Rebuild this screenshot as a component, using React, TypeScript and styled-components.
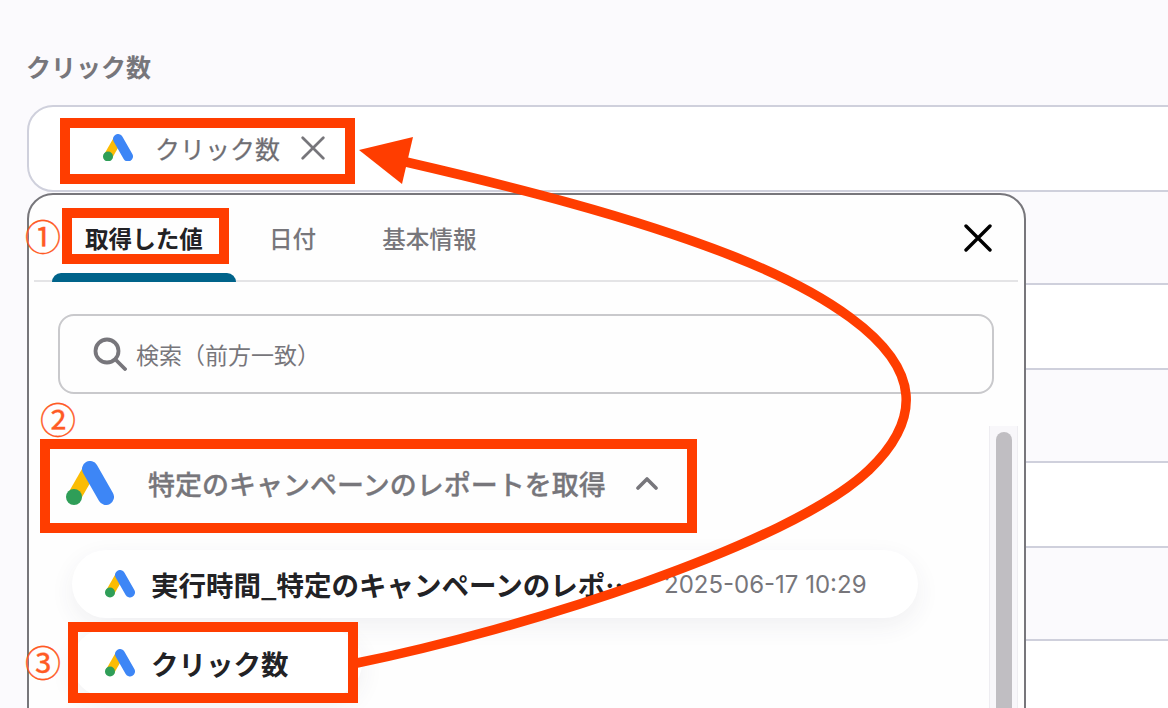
import styled, { createGlobalStyle } from 'styled-components';

const GlobalStyle = createGlobalStyle`
  html, body {
    margin: 0;
    padding: 0;
    background: #fbfafd;
  }
  body {
    font-family: 'Noto Sans CJK JP', 'Noto Sans', sans-serif;
  }
`;

const Page = styled.div`
  position: relative;
  width: 1168px;
  height: 708px;
  overflow: hidden;
  background: #fbfafd;
`;

const Form = styled.div`
  display: flex;
  flex-direction: column;
  gap: 91px;
  padding: 46px 0 0 27px;
`;

const FieldLabel = styled.div`
  height: 40px;
  margin-bottom: -72px;
  margin-left: -1px;
  font-size: 25px;
  line-height: 40px;
  font-weight: 700;
  color: #77767b;
`;

const Input = styled.div`
  display: flex;
  align-items: center;
  box-sizing: border-box;
  height: 87px;
  margin-right: -60px;
  padding: 0 0 0 74px;
  flex-shrink: 0;
  background: #fff;
  border: 2px solid #cfd0dc;
  border-radius: 26px;
`;

const Chip = styled.div`
  display: flex;
  align-items: center;
  font-size: 25px;
  color: #6f6e73;
  margin-top: -2px;
  -webkit-text-stroke: 0.25px #6f6e73;
`;

const ChipText = styled.span`
  margin: 0 21px 0 22px;
`;

const Panel = styled.div`
  position: absolute;
  left: 27px;
  top: 193px;
  box-sizing: border-box;
  width: 999px;
  height: 560px;
  background: #fefefe;
  border: 2px solid #77767b;
  border-radius: 26px 26px 0 0;
`;

const TabBar = styled.div`
  display: flex;
  align-items: center;
  height: 87px;
  box-sizing: border-box;
  margin: 0 6px 0 5px;
  padding: 0 26px 0 18px;
  border-bottom: 2px solid #e4e4e6;
`;

const Tab = styled.div<{ $active?: boolean }>`
  position: relative;
  align-self: stretch;
  display: flex;
  align-items: center;
  padding: 0 33px;
  margin-bottom: -2px;
  padding-bottom: 2px;
  font-size: 23.6px;
  font-weight: ${(p) => (p.$active ? 700 : 500)};
  color: ${(p) => (p.$active ? '#222225' : '#77767b')};

  &::after {
    content: '';
    display: ${(p) => (p.$active ? 'block' : 'none')};
    position: absolute;
    left: 0;
    right: 0;
    bottom: 0;
    height: 9px;
    background: #00638a;
    border-radius: 9px 9px 0 0;
  }
`;

const CloseButton = styled.button`
  display: flex;
  margin-left: auto;
  padding: 0;
  border: 0;
  background: none;
`;

const SearchBox = styled.div`
  display: flex;
  align-items: center;
  box-sizing: border-box;
  width: 936px;
  height: 80px;
  margin: 32px 0 0 29px;
  padding-left: 33px;
  border: 2px solid #c9c9cc;
  border-radius: 16px;
`;

const SearchText = styled.span`
  margin-left: 9px;
  font-size: 23px;
  color: #77767b;
`;

const Body = styled.div`
  display: flex;
  margin-top: 32px;
  height: 300px;
`;

const List = styled.div`
  flex: 1;
  min-width: 0;
  padding-top: 20px;
`;

const GroupHeader = styled.div`
  display: flex;
  align-items: center;
  height: 74px;
  margin-bottom: 30px;
  padding-left: 37px;
`;

const GroupTitle = styled.span`
  margin: 0 30px 0 34px;
  font-size: 27px;
  font-weight: 500;
  color: #77767b;
  -webkit-text-stroke: 0.3px #77767b;
`;

const Item = styled.div<{ $wide?: boolean }>`
  display: flex;
  align-items: center;
  box-sizing: border-box;
  width: ${(p) => (p.$wide ? '846px' : '290px')};
  height: 68px;
  margin: 0 0 11px 43px;
  padding-left: 33px;
  background: #fff;
  border-radius: 34px;
  box-shadow: 0 8px 24px rgba(60, 60, 80, 0.07);
`;

const ItemName = styled.span<{ $clip?: boolean }>`
  margin-left: 16px;
  font-size: 27.5px;
  font-weight: 700;
  color: #222225;
  white-space: nowrap;
  ${(p) => p.$clip && 'width: 484px; overflow: hidden; text-overflow: ellipsis; flex-shrink: 0;'}
`;

const ItemDate = styled.span`
  margin-left: 29px;
  font-family: Inter, 'Noto Sans', sans-serif;
  font-size: 24px;
  color: #77767b;
  white-space: nowrap;
`;

const ScrollTrack = styled.div`
  box-sizing: border-box;
  width: 29px;
  margin-right: 6px;
  padding: 6px 5px 0 6px;
  background: #f8f7fa;
  border-left: 1px solid #eeedf1;
  border-right: 1px solid #eeedf1;
`;

const ScrollThumb = styled.div`
  width: 16px;
  height: 400px;
  background: #c0bec2;
  border-radius: 8px;
`;

const RedBox = styled.div<{ $x: number; $y: number; $w: number; $h: number }>`
  position: absolute;
  left: ${(p) => p.$x}px;
  top: ${(p) => p.$y}px;
  width: ${(p) => p.$w}px;
  height: ${(p) => p.$h}px;
  box-sizing: border-box;
  border: 10px solid #ff3d00;
`;

const Step = styled.span<{ $x: number; $y: number }>`
  position: absolute;
  left: ${(p) => p.$x}px;
  top: ${(p) => p.$y}px;
  font-size: 36px;
  line-height: 40px;
  color: #ff5a24;
  -webkit-text-stroke: 0.3px #ff5a24;
`;

const ArrowLayer = styled.svg`
  position: absolute;
  left: 0;
  top: 0;
`;

function AdsLogo({ width }: { width: number }) {
  return (
    <svg width={width} height={(width * 44) / 48} viewBox="0 0 48 44" style={{ flexShrink: 0 }}>
      <path d="M8 36 L24 8" stroke="#fbbc04" strokeWidth="14" fill="none" />
      <path d="M24 8 L40 36" stroke="#3d86f6" strokeWidth="16" strokeLinecap="round" fill="none" />
      <circle cx="8" cy="36" r="8" fill="#2f9e58" />
    </svg>
  );
}

function Cross({ size, color, weight }: { size: number; color: string; weight: number }) {
  return (
    <svg width={size} height={size} viewBox="0 0 28 28" fill="none">
      <path d="M2 2 L26 26 M26 2 L2 26" stroke={color} strokeWidth={weight} strokeLinecap="round" />
    </svg>
  );
}

export default function App() {
  return (
    <Page>
      <GlobalStyle />
      <Form>
        <FieldLabel>クリック数</FieldLabel>
        <Input>
          <Chip>
            <AdsLogo width={30} />
            <ChipText>クリック数</ChipText>
            <Cross size={24} color="#77767b" weight={3.2} />
          </Chip>
        </Input>
        <Input />
        <Input />
        <Input />
      </Form>

      <Panel>
        <TabBar>
          <Tab $active>取得した値</Tab>
          <Tab>日付</Tab>
          <Tab>基本情報</Tab>
          <CloseButton>
            <Cross size={28} color="#000" weight={3.4} />
          </CloseButton>
        </TabBar>
        <SearchBox>
          <svg width="34" height="34" viewBox="0 0 34 34" fill="none" stroke="#77767b" strokeWidth="3.8" strokeLinecap="round">
            <circle cx="14" cy="14" r="11.5" />
            <path d="M23 23 L32 32" />
          </svg>
          <SearchText>検索（前方一致）</SearchText>
        </SearchBox>
        <Body>
          <List>
            <GroupHeader>
              <AdsLogo width={48} />
              <GroupTitle>特定のキャンペーンのレポートを取得</GroupTitle>
              <svg width="22" height="14" viewBox="0 0 22 14" fill="none" stroke="#77767b" strokeWidth="3.6" strokeLinecap="round" strokeLinejoin="round">
                <path d="M2 12 L11 3 L20 12" />
              </svg>
            </GroupHeader>
            <Item $wide>
              <AdsLogo width={30} />
              <ItemName $clip>実行時間_特定のキャンペーンのレポートを取得</ItemName>
              <ItemDate>2025-06-17 10:29</ItemDate>
            </Item>
            <Item>
              <AdsLogo width={30} />
              <ItemName>クリック数</ItemName>
            </Item>
          </List>
          <ScrollTrack>
            <ScrollThumb />
          </ScrollTrack>
        </Body>
      </Panel>

      <RedBox $x={60} $y={118} $w={295} $h={66} />
      <RedBox $x={62} $y={208} $w={167} $h={56} />
      <RedBox $x={40} $y={439} $w={657} $h={94} />
      <RedBox $x={68} $y={622} $w={290} $h={81} />
      <Step $x={25} $y={215}>①</Step>
      <Step $x={40} $y={398}>②</Step>
      <Step $x={25} $y={641}>③</Step>

      <ArrowLayer width="1168" height="708" viewBox="0 0 1168 708" fill="none">
        <path
          d="M357 663 C 520 630, 790 545, 869 470 C 896 444, 908 420, 906 395 C 902 340, 820 290, 730 255 C 630 216, 510 186, 406 162"
          stroke="#ff3d00"
          strokeWidth="9.5"
        />
        <polygon points="359,150 413,137 402,184" fill="#ff3d00" />
      </ArrowLayer>
    </Page>
  );
}
